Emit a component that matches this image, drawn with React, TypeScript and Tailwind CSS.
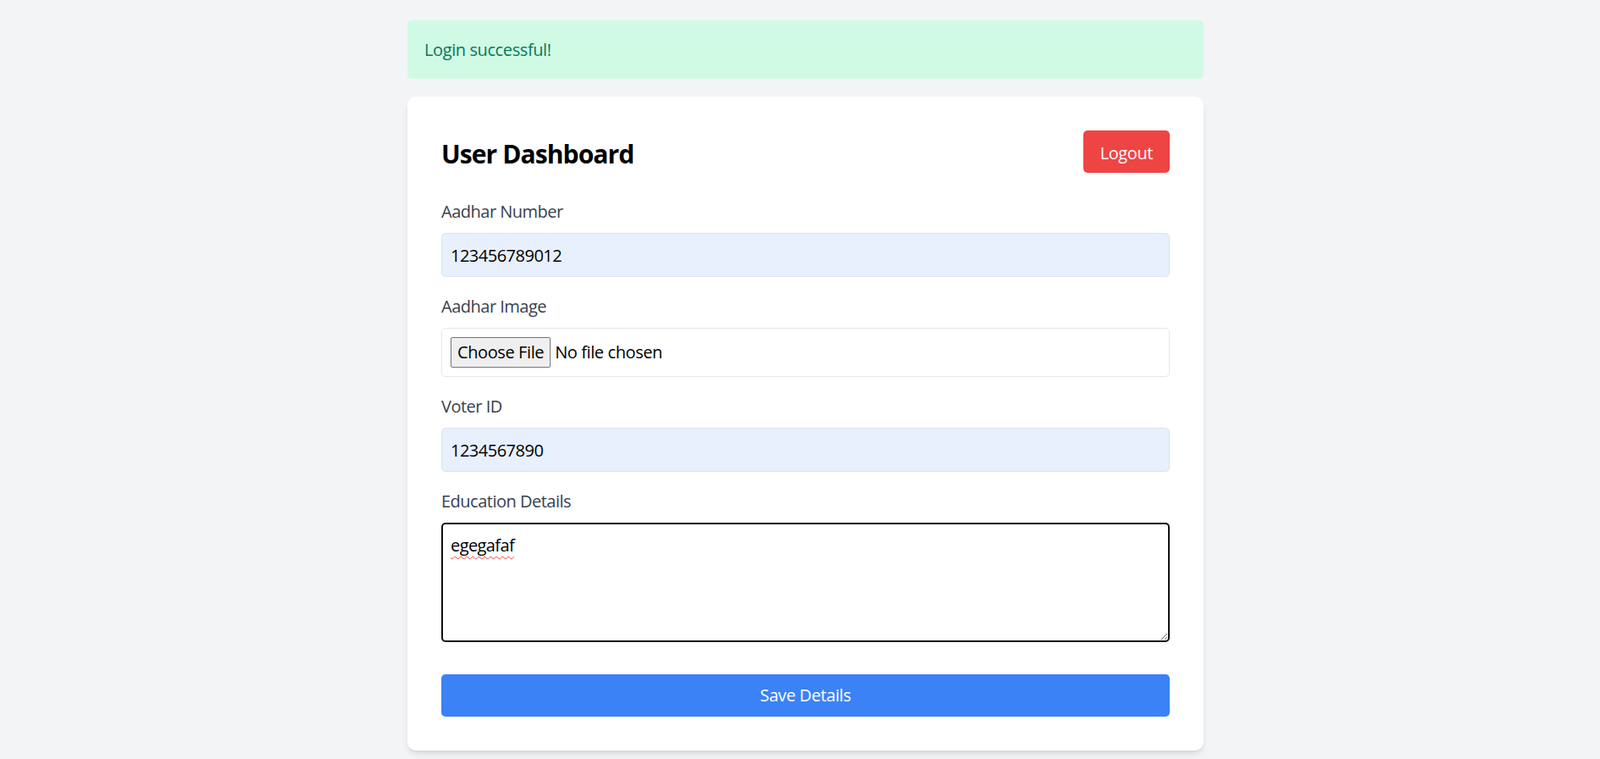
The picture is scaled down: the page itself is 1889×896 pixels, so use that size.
import React from "react";

export default function App() {
  return (
    <div
      className="min-h-screen bg-[#f3f4f6] pt-[24px] pl-[13px]"
      style={{ fontFamily: '"Open Sans", "Noto Sans", sans-serif' }}
    >
      <div className="mx-auto w-[940px]">
        <div className="mb-[21px] rounded-[5px] bg-[#d1fae5] p-[20px] text-[20px] leading-[29px] tracking-[-0.4px] text-[#047857]">
          Login successful!
        </div>
        <div className="rounded-[10px] bg-white p-[40px] shadow-[0_5px_8px_-2px_rgba(0,0,0,0.12),0_2px_4px_-2px_rgba(0,0,0,0.08)]">
          <div className="mb-[31px] flex items-center justify-between">
            <h1 className="mt-[4px] text-[30px] font-bold leading-[45px] tracking-[-0.9px] text-black">
              User Dashboard
            </h1>
            <button className="h-[50px] rounded-[5px] bg-[#ef4444] px-[20px] pt-[3px] text-[20px] leading-[30px] tracking-[-0.4px] text-white">
              Logout
            </button>
          </div>

          <div className="mb-[20px]">
            <label className="mb-[10px] block text-[20px] leading-[30px] tracking-[-0.5px] text-[#374151]">
              Aadhar Number
            </label>
            <input
              readOnly
              value="123456789012"
              className="block h-[52px] w-full rounded-[5px] border border-[#dde3ec] bg-[#e8f0fe] px-[10px] text-[20px] tracking-[-0.5px] text-black outline-none"
            />
          </div>

          <div className="mb-[20px]">
            <label className="mb-[10px] block text-[20px] leading-[30px] tracking-[-0.5px] text-[#374151]">
              Aadhar Image
            </label>
            <div className="flex h-[58px] w-full items-center rounded-[5px] border border-[#e5e7eb] bg-white px-[10px]">
              <span className="flex h-[36px] items-center rounded-[2px] border border-[#767676] bg-[#efefef] px-[7px] text-[20px] tracking-[-0.4px] text-black">
                Choose File
              </span>
              <span className="ml-[5px] text-[20px] tracking-[-0.4px] text-black">No file chosen</span>
            </div>
          </div>

          <div className="mb-[20px]">
            <label className="mb-[10px] block text-[20px] leading-[30px] tracking-[-0.5px] text-[#374151]">
              Voter ID
            </label>
            <input
              readOnly
              value="1234567890"
              className="block h-[52px] w-full rounded-[5px] border border-[#dde3ec] bg-[#e8f0fe] px-[10px] text-[20px] tracking-[-0.5px] text-black outline-none"
            />
          </div>

          <div className="mb-[38px]">
            <label className="mb-[10px] block text-[20px] leading-[30px] tracking-[-0.5px] text-[#374151]">
              Education Details
            </label>
            <textarea
              readOnly
              defaultValue="egegafaf"
              className="block h-[141px] w-full rounded-[5px] border-2 border-[#101010] bg-white px-[9px] py-[10px] text-[20px] leading-[30px] tracking-[-0.6px] text-black underline decoration-[#ef4444] decoration-wavy decoration-1 underline-offset-[5px] outline-none"
            />
          </div>

          <button className="block h-[50px] w-full rounded-[5px] bg-[#3b82f6] text-[20px] leading-[30px] tracking-[-0.4px] text-white">
            Save Details
          </button>
        </div>
      </div>
    </div>
  );
}
